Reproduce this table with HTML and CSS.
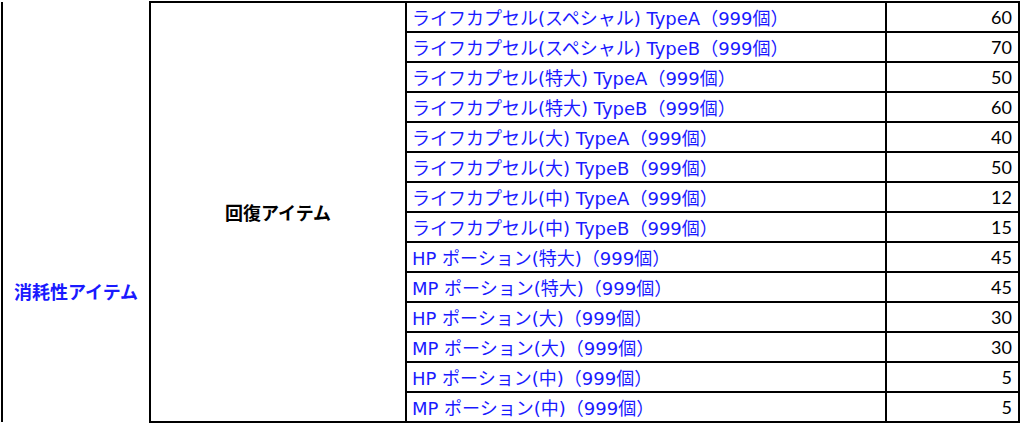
FILE: index.html
```html
<!DOCTYPE html>
<html lang="ja">

<head>
    <meta charset="UTF-8">
    <meta name="viewport" content="width=device-width, initial-scale=1.0">
    <title>アイテム一覧</title>
    <link rel="stylesheet" href="styles.css">
</head>

<body>
    <table class="item-table">
        <colgroup>
            <col class="col-cat">
            <col class="col-sub">
            <col class="col-name">
            <col class="col-num">
        </colgroup>
        <tbody>
            <tr>
                <td class="cat" rowspan="14">消耗性アイテム</td>
                <td class="sub" rowspan="14">回復アイテム</td>
                <td class="name">ライフカプセル(スペシャル) TypeA（999個）</td>
                <td class="num">60</td>
            </tr>
            <tr>
                <td class="name">ライフカプセル(スペシャル) TypeB（999個）</td>
                <td class="num">70</td>
            </tr>
            <tr>
                <td class="name">ライフカプセル(特大) TypeA（999個）</td>
                <td class="num">50</td>
            </tr>
            <tr>
                <td class="name">ライフカプセル(特大) TypeB（999個）</td>
                <td class="num">60</td>
            </tr>
            <tr>
                <td class="name">ライフカプセル(大) TypeA（999個）</td>
                <td class="num">40</td>
            </tr>
            <tr>
                <td class="name">ライフカプセル(大) TypeB（999個）</td>
                <td class="num">50</td>
            </tr>
            <tr>
                <td class="name">ライフカプセル(中) TypeA（999個）</td>
                <td class="num">12</td>
            </tr>
            <tr>
                <td class="name">ライフカプセル(中) TypeB（999個）</td>
                <td class="num">15</td>
            </tr>
            <tr>
                <td class="name">HP ポーション(特大)（999個）</td>
                <td class="num">45</td>
            </tr>
            <tr>
                <td class="name">MP ポーション(特大)（999個）</td>
                <td class="num">45</td>
            </tr>
            <tr>
                <td class="name">HP ポーション(大)（999個）</td>
                <td class="num">30</td>
            </tr>
            <tr>
                <td class="name">MP ポーション(大)（999個）</td>
                <td class="num">30</td>
            </tr>
            <tr>
                <td class="name">HP ポーション(中)（999個）</td>
                <td class="num">5</td>
            </tr>
            <tr>
                <td class="name">MP ポーション(中)（999個）</td>
                <td class="num">5</td>
            </tr>
        </tbody>
    </table>
</body>

</html>
```

FILE: styles.css
```css
* {
    margin: 0;
    padding: 0;
    box-sizing: border-box;
}

body {
    background-color: white;
    font-family: "DejaVu Sans", "Noto Sans CJK JP", sans-serif;
    overflow: hidden;
}

.item-table {
    border-collapse: collapse;
    table-layout: fixed;
    width: 1018px;
    margin-left: 1px;
    margin-top: 1px;
}

.col-cat {
    width: 148px;
}

.col-sub {
    width: 256px;
}

.col-name {
    width: 480px;
}

.col-num {
    width: 133px;
}

.item-table td {
    border: 2px solid black;
    height: 30px;
    font-size: 18px;
    white-space: nowrap;
}

.item-table td.cat {
    border-top: none;
    border-bottom: none;
    text-align: center;
    vertical-align: middle;
    padding-top: 158px;
    color: #1a1aff;
    font-weight: 700;
    font-family: "Noto Sans CJK JP", sans-serif;
}

.item-table td.sub {
    text-align: center;
    vertical-align: middle;
    font-weight: 700;
    font-family: "Noto Sans CJK JP", sans-serif;
}

.item-table td.name {
    color: #1a1aff;
    padding-left: 5px;
}

.item-table td.num {
    text-align: right;
    padding-right: 6px;
    font-family: "Lato", sans-serif;
}
```
